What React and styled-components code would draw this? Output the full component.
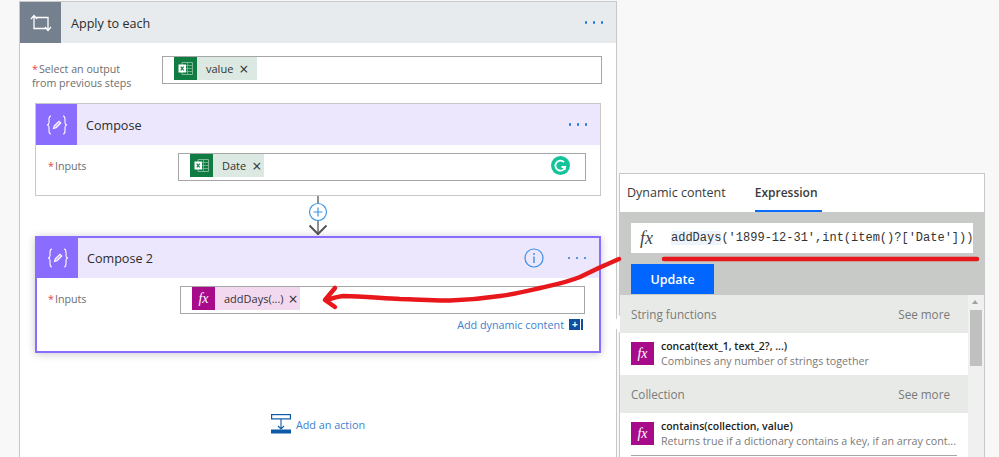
import React from 'react';
import styled, { createGlobalStyle } from 'styled-components';

const FONT = `"Open Sans", "Noto Sans", sans-serif`;

const Global = createGlobalStyle`
  html, body {
    margin: 0;
    padding: 0;
    height: 457px;
    overflow: hidden;
    background: #f8f8f8;
    font-family: ${FONT};
  }
`;

const LoopIcon = () => (
  <svg width="22" height="18" viewBox="0 0 22 18" fill="none" stroke="#fff" strokeWidth="1.3">
    <path d="M1 5l3-3.5L7 5M4 2v12.5h12" />
    <path d="M21 13l-3 3.5-3-3.5M18 16V3.5H6" />
  </svg>
);

const ComposeIcon = () => (
  <svg width="22" height="22" viewBox="0 0 22 22" fill="none" stroke="#fff" strokeWidth="1.1">
    <path d="M5 2C3 2 3 3.500 3 5.500v3.200C3 10 2.300 10.800 1 11c1.300.2 2 1 2 2.300v3.200C3 18.500 3 20 5 20" />
    <path d="M17 2c2 0 2 1.500 2 3.500v3.200c0 1.300.7 2.100 2 2.300-1.300.2-2 1-2 2.300v3.200c0 2 0 3.500-2 3.500" />
    <path d="M7.500 14.500l.8-2.600 4.700-4.700 1.800 1.800-4.700 4.700z" fill="#fff" fillOpacity=".45" />
  </svg>
);

const ExcelIcon = () => (
  <svg width="15" height="13" viewBox="0 0 15 13" fill="none">
    <path d="M4 .5h10.500v12H4z" stroke="#7fb799" strokeWidth="1" />
    <path d="M9.500 .5v12M4 3.500h10.500M4 6.500h10.500M4 9.500h10.500" stroke="#7fb799" strokeWidth=".8" />
    <rect x=".5" y="2.500" width="7.500" height="8" fill="#fff" />
    <path d="M2.700 4.700l3 3.600M5.700 4.700l-3 3.600" stroke="#107c41" strokeWidth="1.100" />
  </svg>
);

const Connector = () => (
  <svg width="30" height="40" viewBox="0 0 30 40" fill="none">
    <path d="M15 0v8M15 24v15" stroke="#555" strokeWidth="1.300" />
    <path d="M6.500 29.500L15 38l8.500-8.500" stroke="#555" strokeWidth="2" />
    <circle cx="15" cy="16" r="8.500" fill="#fff" stroke="#3f96e6" strokeWidth="1.200" />
    <path d="M15 11.500v9M10.500 16h9" stroke="#3f96e6" strokeWidth="1.200" />
  </svg>
);

const InfoIcon = () => (
  <svg width="20" height="20" viewBox="0 0 20 20" fill="none" stroke="#3a8ee6" strokeWidth="1.200">
    <circle cx="10" cy="10" r="9" />
    <path d="M10 8.500v6.500M10 5v2" strokeWidth="1.400" />
  </svg>
);

const GrammarlyIcon = () => (
  <svg width="19" height="19" viewBox="0 0 19 19" fill="none">
    <circle cx="9.500" cy="9.500" r="9.500" fill="#15c39a" />
    <path d="M13 6.200A5 5 0 1 0 14.200 11H10.500" stroke="#fff" strokeWidth="1.800" />
    <path d="M12.500 11l1.800 2.800" stroke="#fff" strokeWidth="1.800" />
  </svg>
);

const AddActionIcon = () => (
  <svg width="20" height="20" viewBox="0 0 20 20" fill="none">
    <rect x=".6" y=".6" width="18.800" height="4.300" stroke="#0f5aa8" strokeWidth="1.200" fill="#fff" />
    <path d="M10 5v10M7 12l3 3 3-3" stroke="#0f5aa8" strokeWidth="1.100" />
    <rect x="0" y="15.500" width="20" height="4" fill="#0f5aa8" />
  </svg>
);

const Page = styled.div`
  display: flex;
  align-items: flex-start;
  width: 999px;
  height: 457px;
  padding: 1px 0 0 19px;
  box-sizing: border-box;
  overflow: hidden;
  position: relative;
`;

const Outer = styled.div`
  flex: none;
  width: 598px;
  height: 470px;
  box-sizing: border-box;
  background: #fff;
  border: 1px solid #c8c8c8;
`;

const Header = styled.div`
  display: flex;
  align-items: center;
  height: ${p => p.$height || 41}px;
  background: ${p => p.$bg};
`;

const HeaderIcon = styled.div`
  flex: none;
  width: 41px;
  height: 100%;
  display: flex;
  align-items: center;
  justify-content: center;
  background: ${p => p.$bg};
`;

const Title = styled.div`
  margin-left: ${p => p.$indent}px;
  padding-top: 1px;
  flex: 1;
  font-size: 12.6px;
  color: #2b2b2b;
`;

const Dots = styled.div`
  flex: none;
  display: flex;
  gap: 5.5px;
  margin-right: ${p => p.$right}px;
  margin-left: ${p => p.$left || 0}px;

  i {
    width: 2.5px;
    height: 2.5px;
    background: #1f78dc;
    border-radius: 50%;
  }
`;

const FieldRow = styled.div`
  display: flex;
  height: 28px;
  margin: ${p => p.$margin};
`;

const Label = styled.div`
  flex: none;
  width: ${p => p.$width}px;
  font-size: 10.7px;
  line-height: 14px;
  color: #6e6e6e;
  padding-top: ${p => p.$top}px;

  b {
    color: #e8434a;
    font-weight: 400;
    margin-right: 1px;
  }
`;

const Input = styled.div`
  flex: none;
  width: ${p => p.$width}px;
  height: 28px;
  box-sizing: border-box;
  border: 1px solid #a6a6a6;
  display: flex;
  align-items: flex-start;
  padding: 0 ${p => p.$pr || 0}px 0 ${p => p.$pl}px;
`;

const Chip = styled.div`
  display: flex;
  align-items: center;
  height: 23px;
  width: ${p => p.$width}px;
  background: ${p => p.$bg};
  font-size: 11px;
  color: #333;
`;

const ChipIcon = styled.span`
  flex: none;
  width: 23px;
  height: 23px;
  display: flex;
  align-items: center;
  justify-content: center;
  background: ${p => p.$bg};
  margin-right: ${p => p.$gap}px;
`;

const Close = styled.span`
  margin-left: ${p => p.$gap}px;
  font-size: 16px;
  line-height: 1;
  color: #333;
`;

const Fx = styled.span`
  font-family: "Liberation Serif", serif;
  font-style: italic;
  font-size: ${p => p.$size || 14}px;
  color: ${p => p.$color || '#fff'};
`;

const GrammarlySlot = styled.div`
  margin: 2px 0 0 auto;
`;

const Compose = styled.div`
  margin: 0 15px;
  width: 566px;
  box-sizing: border-box;
  background: #fff;
  border: 1px solid #c8c8c8;
  height: 93px;
`;

const ComposeActive = styled.div`
  margin: 0 15px;
  width: 566px;
  box-sizing: border-box;
  background: #fff;
  border: 2px solid #8a6cff;
  height: 117px;
  box-shadow: 0 1px 8px rgba(0, 0, 0, 0.22);
`;

const ConnectorRow = styled.div`
  width: 566px;
  margin: 0 15px;
  height: 40px;
  display: flex;
  justify-content: center;
`;

const DynamicLink = styled.div`
  display: flex;
  justify-content: flex-end;
  align-items: center;
  gap: 5px;
  margin: 3px 15px 0 0;
  font-size: 10.8px;
  color: #3b82d0;
`;

const PlusBox = styled.span`
  display: flex;
  width: 15px;
  height: 11px;
  background: linear-gradient(to right, #0f4f9e 0 11px, #fff 11px 12px, #0f4f9e 12px 14px, #fff 14px);
  color: #fff;
  font-size: 10px;
  line-height: 11px;
  font-weight: 700;
  padding-left: 3px;
  box-sizing: border-box;
`;

const AddAction = styled.div`
  display: flex;
  justify-content: center;
  align-items: center;
  gap: 5px;
  margin-top: 61px;
  width: 566px;
  margin-left: 15px;
  font-size: 10.8px;
  color: #3b82d0;
`;

const Panel = styled.div`
  flex: none;
  position: relative;
  width: 366px;
  height: 300px;
  margin: 172px 0 0 2px;
  box-sizing: border-box;
  background: #fff;
  border: 1px solid #c8c8c8;
`;

const Caret = styled.span`
  position: absolute;
  left: -8px;
  top: 141px;
  width: 8px;
  height: 18px;
  background: #fff;
  clip-path: polygon(100% 0, 100% 100%, 0 50%);
`;

const Tabs = styled.div`
  display: flex;
  height: 38px;
  padding-left: 7px;
  gap: 25px;
`;

const Tab = styled.div`
  height: 38px;
  box-sizing: border-box;
  padding: 10px 4px 0 0;
  font-size: ${p => (p.$active ? 12 : 12.5)}px;
  font-weight: ${p => (p.$active ? 600 : 400)};
  color: #3a3a3a;
  border-bottom: 2px solid ${p => (p.$active ? '#0a6cff' : 'transparent')};
`;

const Band = styled.div`
  height: 83px;
  background: #c8cac7;
  padding: 11px 0 0 11px;
  box-sizing: border-box;
`;

const ExprBox = styled.div`
  width: 342px;
  height: 30px;
  background: #fff;
  display: flex;
  align-items: center;
  overflow: hidden;
  white-space: nowrap;
  margin-bottom: 11px;
`;

const FxSlot = styled.span`
  flex: none;
  width: 40px;
  padding-left: 9px;
  box-sizing: border-box;
`;

const Expr = styled.span`
  font-family: "Liberation Mono", monospace;
  font-size: 12px;
  color: #333;

  mark {
    background: #eef4fb;
    color: inherit;
  }
`;

const Update = styled.div`
  width: 83px;
  height: 30px;
  background: #0066ff;
  color: #fff;
  font-size: 12.5px;
  font-weight: 600;
  display: flex;
  align-items: center;
  justify-content: center;
`;

const ListArea = styled.div`
  display: flex;
  height: 170px;
`;

const List = styled.div`
  width: 348px;
  flex: none;
`;

const GroupHead = styled.div`
  display: flex;
  justify-content: space-between;
  align-items: center;
  height: 38px;
  padding: 0 18px 0 11px;
  background: #e8eae7;
  font-size: 11.7px;
  color: #7a7a7a;
`;

const Row = styled.div`
  display: flex;
  gap: 7px;
  height: 42px;
  box-sizing: border-box;
  padding: 9px 0 0 11px;
  background: #fff;
`;

const RowIcon = styled.span`
  flex: none;
  width: 23px;
  height: 23px;
  display: flex;
  align-items: center;
  justify-content: center;
  background: #a80b8a;
`;

const RowText = styled.div`
  font-size: 10.7px;
  line-height: 15px;
  color: #7a7a7a;
  white-space: nowrap;
  margin-top: -3px;

  b {
    display: block;
    font-size: 10.5px;
    font-weight: 600;
    color: #222;
  }
`;

const Rule = styled.div`
  height: 1px;
  margin: 0 11px;
  background: #a6a6a6;
`;

const Scrollbar = styled.div`
  flex: 1;
  background: #f0f0f0;
  position: relative;

  &::before {
    content: '';
    position: absolute;
    top: 5px;
    left: 4px;
    border: 3.5px solid transparent;
    border-top: 0;
    border-bottom: 4px solid #a0a0a0;
  }

  &::after {
    content: '';
    position: absolute;
    top: 15px;
    left: 2px;
    width: 12px;
    height: 56px;
    background: #c0c0c0;
  }
`;

const Annotations = styled.svg`
  position: absolute;
  left: 0;
  top: 0;
  pointer-events: none;
`;

const Excel = ({ gap }) => (
  <ChipIcon $bg="#107c41" $gap={gap}>
    <ExcelIcon />
  </ChipIcon>
);

const ThreeDots = ({ right, left }) => (
  <Dots $right={right} $left={left}>
    <i /><i /><i />
  </Dots>
);

export default function App() {
  return (
    <>
      <Global />
      <Page>
        <Outer>
          <Header $bg="#e8ebed">
            <HeaderIcon $bg="#75808f"><LoopIcon /></HeaderIcon>
            <Title $indent={10}>Apply to each</Title>
            <ThreeDots right={13} />
          </Header>
          <FieldRow $margin="13px 0 19px 12px">
            <Label $width={130} $top={6}>
              <b>*</b>Select an output<br />from previous steps
            </Label>
            <Input $width={440} $pl={11}>
              <Chip $width={83} $bg="#dbe9e2">
                <Excel gap={9} />value<Close $gap={6}>×</Close>
              </Chip>
            </Input>
          </FieldRow>
          <Compose>
            <Header $bg="#ece7fd">
              <HeaderIcon $bg="#8a6cff"><ComposeIcon /></HeaderIcon>
              <Title $indent={9}>Compose</Title>
              <ThreeDots right={13} />
            </Header>
            <FieldRow $margin="8px 0 0 12px">
              <Label $width={130} $top={6}><b>*</b>Inputs</Label>
              <Input $width={408} $pl={11} $pr={15}>
                <Chip $width={74} $bg="#dbe9e2">
                  <Excel gap={9} />Date<Close $gap={6}>×</Close>
                </Chip>
                <GrammarlySlot><GrammarlyIcon /></GrammarlySlot>
              </Input>
            </FieldRow>
          </Compose>
          <ConnectorRow><Connector /></ConnectorRow>
          <ComposeActive>
            <Header $bg="#ece7fd" $height={40}>
              <HeaderIcon $bg="#8a6cff"><ComposeIcon /></HeaderIcon>
              <Title $indent={9}>Compose 2</Title>
              <InfoIcon />
              <ThreeDots right={13} left={24} />
            </Header>
            <FieldRow $margin="8px 0 0 11px">
              <Label $width={132} $top={6}><b>*</b>Inputs</Label>
              <Input $width={405} $pl={11}>
                <Chip $width={108} $bg="#f3d9ef">
                  <ChipIcon $bg="#a80b8a" $gap={9}><Fx>fx</Fx></ChipIcon>
                  addDays(...)<Close $gap={5}>×</Close>
                </Chip>
              </Input>
            </FieldRow>
            <DynamicLink>Add dynamic content <PlusBox>+</PlusBox></DynamicLink>
          </ComposeActive>
          <AddAction><AddActionIcon />Add an action</AddAction>
        </Outer>
        <Panel>
          <Caret />
          <Tabs>
            <Tab>Dynamic content</Tab>
            <Tab $active>Expression</Tab>
          </Tabs>
          <Band>
            <ExprBox>
              <FxSlot><Fx $size={18} $color="#444">fx</Fx></FxSlot>
              <Expr><mark>addDays</mark>('1899-12-31',int(item()?['Date']))</Expr>
            </ExprBox>
            <Update>Update</Update>
          </Band>
          <ListArea>
            <List>
              <GroupHead>String functions<span>See more</span></GroupHead>
              <Row>
                <RowIcon><Fx>fx</Fx></RowIcon>
                <RowText><b>concat(text_1, text_2?, ...)</b>Combines any number of strings together</RowText>
              </Row>
              <GroupHead>Collection<span>See more</span></GroupHead>
              <Row>
                <RowIcon><Fx>fx</Fx></RowIcon>
                <RowText><b>contains(collection, value)</b>Returns true if a dictionary contains a key, if an array cont...</RowText>
              </Row>
              <Rule />
            </List>
            <Scrollbar />
          </ListArea>
        </Panel>
        <Annotations width="999" height="457" viewBox="0 0 999 457" fill="none" stroke="#e8171c" strokeLinecap="round" strokeLinejoin="round">
          <path d="M619 259C600 267 590 272 580 277C565 283 553 285 540 288C527 291 515 294 500 296C480 299 465 300 450 300.500C432 301 415 299 400 299C380 298 360 296 343 296C335 297 330 299 326 300" strokeWidth="4.5" />
          <path d="M335 288L325 300L335 307" strokeWidth="4.5" />
          <path d="M664 259H977" strokeWidth="4.5" />
        </Annotations>
      </Page>
    </>
  );
}
